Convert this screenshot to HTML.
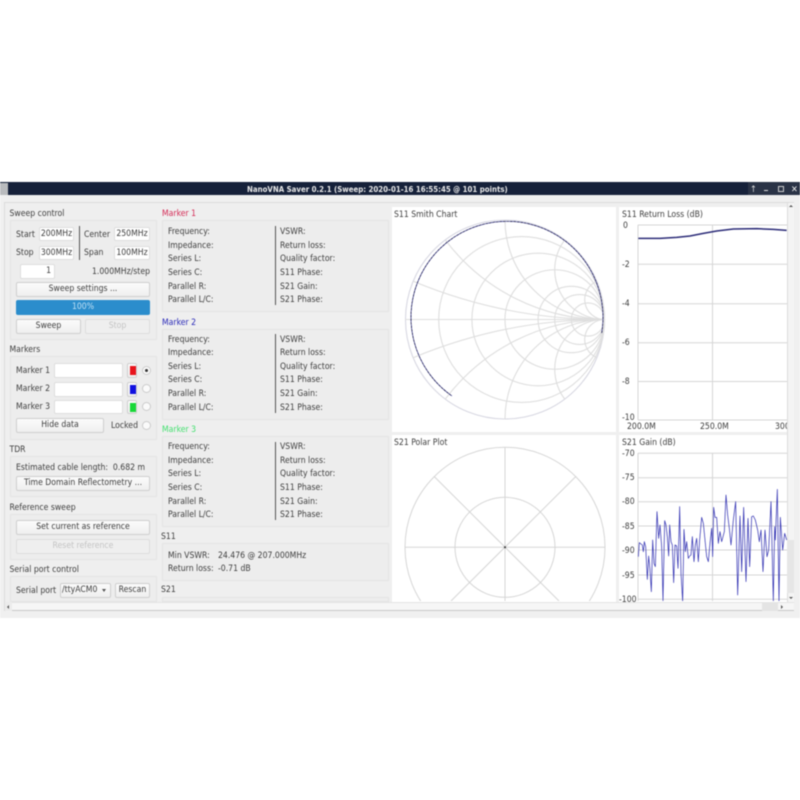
<!DOCTYPE html>
<html><head><meta charset="utf-8"><style>
html,body{margin:0;padding:0;background:#fff;width:800px;height:800px;overflow:hidden;}
#root{position:relative;width:800px;height:800px;overflow:hidden;background:#fff;font-family:"DejaVu Sans Condensed","DejaVu Sans","Liberation Sans",sans-serif;font-stretch:condensed;font-size:8.6px;color:#3e3e3e;filter:blur(.45px);}
#root div,#root span{position:absolute;box-sizing:border-box;}
.t{line-height:12px;white-space:nowrap;margin-top:.7px;}
.g{background:#ededed;border:1px solid #e4e4e4;}
.f{background:#fff;border:1px solid #ddd;border-radius:2px;line-height:13.5px;text-align:center;white-space:nowrap;}
.b{background:linear-gradient(#fbfbfb,#efefef);border:1px solid #cfcfcf;border-radius:2px;line-height:13.5px;text-align:center;white-space:nowrap;color:#3e3e3e;}
.d{color:#c4c4c4;background:#efefef;border-color:#dedede;}
.v{background:#555;width:1px;}
.r{width:9px;height:9px;border-radius:50%;background:#fafafa;border:1px solid #ccc;}
.p{background:#fff;}
</style></head><body><div id="root">
<div style="left:0;top:182px;width:800px;height:13px;background:#16213a;"></div>
<div style="left:0;top:183px;width:8px;height:12px;background:#b9bbbe;"></div>
<div class="t" style="left:247px;top:183px;color:#e8e8e8;font-weight:bold;font-size:7.8px;">NanoVNA Saver 0.2.1 (Sweep: 2020-01-16 16:55:45 @ 101 points)</div>
<div style="left:748px;top:182px;width:52px;height:13px;background:#2a3346;"></div>
<div class="t" style="left:750px;top:183px;color:#ddd;font-size:9px;">↑</div>
<div style="left:764px;top:190px;width:4px;height:1px;background:#ddd;"></div>
<div style="left:778px;top:186px;width:6px;height:6px;border:1px solid #ccc;"></div>
<div class="t" style="left:791px;top:183px;color:#eee;font-weight:bold;font-size:9px;">✕</div>
<div style="left:0;top:195px;width:800px;height:423px;background:#f0f0f0;"></div>
<div style="left:4px;top:202px;width:790px;height:409px;border:1px solid #dcdcdc;background:#efefef;"></div>

<div class="t" style="left:9.5px;top:207px;">Sweep control</div>
<div class="g" style="left:10px;top:220px;width:147px;height:120px;"></div>
<div class="t" style="left:16px;top:228px;">Start</div>
<div class="f" style="left:39px;top:227px;width:35px;height:14px;">200MHz</div>
<div class="t" style="left:16px;top:246px;">Stop</div>
<div class="f" style="left:39px;top:245.500px;width:35px;height:14px;">300MHz</div>
<div class="v" style="left:79px;top:226px;height:34px;"></div>
<div class="t" style="left:84px;top:228px;">Center</div>
<div class="f" style="left:114px;top:227px;width:36px;height:14px;">250MHz</div>
<div class="t" style="left:84px;top:246px;">Span</div>
<div class="f" style="left:114px;top:245.500px;width:36px;height:14px;">100MHz</div>
<div class="f" style="left:20px;top:264px;width:35px;height:15px;text-align:right;padding-right:3px;">1</div>
<div class="t" style="right:650px;top:265px;">1.000MHz/step</div>
<div class="b" style="left:16px;top:282px;width:134px;height:15px;">Sweep settings ...</div>
<div style="left:16px;top:300px;width:134px;height:15px;background:#2b8dcc;border-radius:2px;color:#bfe0f5;text-align:center;line-height:15.500px;">100%</div>
<div class="b" style="left:16px;top:319px;width:65px;height:15px;">Sweep</div>
<div class="b d" style="left:85px;top:319px;width:65px;height:15px;">Stop</div>

<div class="t" style="left:9.5px;top:343px;">Markers</div>
<div class="g" style="left:10px;top:356px;width:147px;height:84px;"></div>
<div class="t" style="left:16px;top:364px;">Marker 1</div>
<div class="f" style="left:54px;top:363px;width:69px;height:15px;"></div>
<div class="b" style="left:127px;top:363px;width:10px;height:15px;"></div>
<div style="left:129.500px;top:366px;width:6px;height:9px;background:#e8141c;"></div>
<div class="r" style="left:141.500px;top:365.500px;"></div>
<div style="left:144.500px;top:368.500px;width:3px;height:3px;border-radius:50%;background:#333;"></div>
<div class="t" style="left:16px;top:382px;">Marker 2</div>
<div class="f" style="left:54px;top:381.500px;width:69px;height:15px;"></div>
<div class="b" style="left:127px;top:381.500px;width:10px;height:15px;"></div>
<div style="left:129.500px;top:384.500px;width:6px;height:9px;background:#1010e0;"></div>
<div class="r" style="left:141.500px;top:384px;"></div>
<div class="t" style="left:16px;top:400.500px;">Marker 3</div>
<div class="f" style="left:54px;top:400px;width:69px;height:14px;"></div>
<div class="b" style="left:127px;top:400px;width:10px;height:14px;"></div>
<div style="left:129.500px;top:402.500px;width:6px;height:9px;background:#18d838;"></div>
<div class="r" style="left:141.500px;top:402px;"></div>
<div class="b" style="left:16px;top:418px;width:88px;height:15px;">Hide data</div>
<div class="t" style="left:111px;top:419px;">Locked</div>
<div class="r" style="left:141.500px;top:420.500px;"></div>

<div class="t" style="left:9.5px;top:443px;">TDR</div>
<div class="g" style="left:10px;top:456px;width:147px;height:41px;"></div>
<div class="t" style="left:16px;top:461px;">Estimated cable length:&nbsp; 0.682 m</div>
<div class="b" style="left:16px;top:476px;width:134px;height:15px;">Time Domain Reflectometry ...</div>

<div class="t" style="left:9.5px;top:501px;">Reference sweep</div>
<div class="g" style="left:10px;top:514px;width:147px;height:46px;"></div>
<div class="b" style="left:16px;top:520px;width:134px;height:15px;">Set current as reference</div>
<div class="b d" style="left:16px;top:539px;width:134px;height:15px;">Reset reference</div>

<div class="t" style="left:9.5px;top:563px;">Serial port control</div>
<div class="g" style="left:10px;top:576px;width:147px;height:26px;"></div>
<div class="t" style="left:16px;top:584px;">Serial port</div>
<div class="b" style="left:60px;top:583px;width:51px;height:15px;text-align:left;padding-left:1px;">/ttyACM0</div>
<div style="left:102px;top:589px;width:0;height:0;border-left:2.5px solid transparent;border-right:2.5px solid transparent;border-top:3px solid #555;"></div>
<div class="b" style="left:115px;top:583px;width:35px;height:15px;">Rescan</div>

<div class="t" style="left:162px;top:207px;color:#d42a55;">Marker 1</div>
<div class="g" style="left:162px;top:220px;width:227px;height:92px;"></div>
<div class="v" style="left:275px;top:226px;height:79px;"></div>
<div class="t" style="left:168px;top:225.500px;line-height:13.600px;white-space:pre;">Frequency:
Impedance:
Series L:
Series C:
Parallel R:
Parallel L/C:</div>
<div class="t" style="left:280px;top:225.500px;line-height:13.600px;white-space:pre;">VSWR:
Return loss:
Quality factor:
S11 Phase:
S21 Gain:
S21 Phase:</div>

<div class="t" style="left:162px;top:316px;color:#2a2ab8;">Marker 2</div>
<div class="g" style="left:162px;top:329px;width:227px;height:91px;"></div>
<div class="v" style="left:275px;top:334px;height:79px;"></div>
<div class="t" style="left:168px;top:333px;line-height:13.600px;white-space:pre;">Frequency:
Impedance:
Series L:
Series C:
Parallel R:
Parallel L/C:</div>
<div class="t" style="left:280px;top:333px;line-height:13.600px;white-space:pre;">VSWR:
Return loss:
Quality factor:
S11 Phase:
S21 Gain:
S21 Phase:</div>

<div class="t" style="left:162px;top:423px;color:#44e070;">Marker 3</div>
<div class="g" style="left:162px;top:436px;width:227px;height:91px;"></div>
<div class="v" style="left:275px;top:442px;height:78px;"></div>
<div class="t" style="left:168px;top:440.500px;line-height:13.600px;white-space:pre;">Frequency:
Impedance:
Series L:
Series C:
Parallel R:
Parallel L/C:</div>
<div class="t" style="left:280px;top:440.500px;line-height:13.600px;white-space:pre;">VSWR:
Return loss:
Quality factor:
S11 Phase:
S21 Gain:
S21 Phase:</div>

<div class="t" style="left:161px;top:530.500px;">S11</div>
<div class="g" style="left:162px;top:543px;width:227px;height:38px;"></div>
<div class="t" style="left:168px;top:549px;">Min VSWR:</div>
<div class="t" style="left:218px;top:549px;">24.476 @ 207.000MHz</div>
<div class="t" style="left:168px;top:562.500px;">Return loss:</div>
<div class="t" style="left:218px;top:562.500px;">-0.71 dB</div>
<div class="t" style="left:161px;top:583.500px;">S21</div>
<div class="g" style="left:162px;top:597px;width:227px;height:5px;"></div>

<div class="p" style="left:392px;top:207px;width:224px;height:225px;"></div>
<div class="p" style="left:619px;top:207px;width:168px;height:225px;"></div>
<div class="p" style="left:392px;top:435px;width:224px;height:167px;"></div>
<div class="p" style="left:619px;top:435px;width:168px;height:167px;"></div>

<svg width="800" height="800" viewBox="0 0 800 800" style="position:absolute;left:0;top:0;display:block;">
<defs>
<clipPath id="rc"><rect x="619" y="207" width="168" height="225"/></clipPath>
<clipPath id="gc"><rect x="392" y="435" width="395" height="166"/></clipPath>
</defs>
<g fill="none" stroke="#dedede" stroke-width="1.100">
<circle cx="505" cy="319.500" r="99.500" stroke="#d8d8e2"/>
<line x1="405" y1="319.500" x2="604" y2="319.500"/>
<circle cx="521.600" cy="319.500" r="82.900"/>
<circle cx="538.200" cy="319.500" r="66.300"/>
<circle cx="554.700" cy="319.500" r="49.750"/>
<circle cx="571.300" cy="319.500" r="33.200"/>
<circle cx="579.600" cy="319.500" r="24.900"/>
<circle cx="587.900" cy="319.500" r="16.600"/>
<path d="M604.500 319.500A497.500 497.500 0 0 1 413.200 281.300"/>
<path d="M604.500 319.500A497.500 497.500 0 0 0 413.200 357.700"/>
<path d="M604.500 319.500A199 199 0 0 1 445.300 239.900"/>
<path d="M604.500 319.500A199 199 0 0 0 445.300 399.100"/>
<path d="M604.500 319.500A99.500 99.500 0 0 1 505 220"/>
<path d="M604.500 319.500A99.500 99.500 0 0 0 505 419"/>
<path d="M604.500 319.500A49.750 49.750 0 0 1 564.700 239.900"/>
<path d="M604.500 319.500A49.750 49.750 0 0 0 564.700 399.100"/>
<path d="M604.500 319.500A19.900 19.900 0 0 1 596.800 281.300"/>
<path d="M604.500 319.500A19.900 19.900 0 0 0 596.800 357.700"/>
</g>
<g fill="none" stroke="#d6d6d6" stroke-width="1">
<g clip-path="url(#gc)">
<circle cx="505" cy="547.300" r="100"/>
<circle cx="505" cy="547.300" r="50"/>
<line x1="405" y1="547.300" x2="605" y2="547.300"/>
<line x1="505" y1="447.300" x2="505" y2="601"/>
<line x1="434.300" y1="476.600" x2="559" y2="601"/>
<line x1="575.700" y1="476.600" x2="451" y2="601"/>
</g>
<g>
<line x1="638" y1="225" x2="787" y2="225"/>
<line x1="638" y1="264.300" x2="787" y2="264.300"/>
<line x1="638" y1="303.700" x2="787" y2="303.700"/>
<line x1="638" y1="342.800" x2="787" y2="342.800"/>
<line x1="638" y1="381.500" x2="787" y2="381.500"/>
<line x1="638" y1="420" x2="787" y2="420"/>
<line x1="638" y1="225" x2="638" y2="420"/>
<line x1="712.500" y1="225" x2="712.500" y2="420"/>
<line x1="638" y1="453.300" x2="787" y2="453.300"/>
<line x1="638" y1="477.700" x2="787" y2="477.700"/>
<line x1="638" y1="501.700" x2="787" y2="501.700"/>
<line x1="638" y1="526" x2="787" y2="526"/>
<line x1="638" y1="550" x2="787" y2="550"/>
<line x1="638" y1="575" x2="787" y2="575"/>
<line x1="638" y1="599.300" x2="787" y2="599.300"/>
<line x1="638" y1="453" x2="638" y2="601"/>
<line x1="712.500" y1="453" x2="712.500" y2="601"/>
</g>
</g>
<path d="M601.700 333 A96 96 0 1 0 452 396" fill="none" stroke="#4a4aa8" stroke-width=".7"/>
<path d="M601.700 333 A96 96 0 1 0 452 396" fill="none" stroke="#1c1c48" stroke-width=".7" stroke-dasharray="2.500 1"/>
<g clip-path="url(#rc)"><polyline transform="translate(390,175) scale(.33333)" fill="none" stroke="#2c2c78" stroke-width="4.500" points="745,190 810,190 860,187 900,183 940,175 980,168 1030,162 1100,161 1150,163 1190,166"/></g>
<g clip-path="url(#gc)"><g transform="translate(390,430) scale(.33333)" fill="none" stroke-linejoin="round">
<polyline stroke="#3636b4" stroke-width="2.200" points="745,380 748,338 753,342 757,345 760,365 763,335 767,350 770,410 772,448 776,378 780,420 784,485 788,330 792,400 796,410 801,245 806,325 810,285 815,350 819,512 824,272 828,285 832,320 836,378 839,285 843,335 847,345 851,458 855,345 860,348 864,415 869,230 873,430 878,515 882,298 886,365 890,335 895,385 899,378 903,375 907,320 912,395 916,345 920,325 925,395 929,330 935,262 940,280 945,330 950,380 955,395 960,340 965,295 968,380 971,232 975,262 980,262 985,340 990,305 995,335 999,320 1003,305 1008,195 1013,255 1018,295 1023,345 1030,270 1037,215 1043,495 1050,258 1055,425 1061,232 1068,455 1074,265 1079,410 1085,260 1090,258 1096,270 1103,300 1108,335 1113,300 1119,425 1125,300 1131,380 1136,360 1143,215 1150,515 1154,290 1156,330 1162,178 1167,515 1171,262 1178,360 1184,310 1190,330"/>
</g></g>
<circle cx="505" cy="547.300" r="1" fill="#333"/>
</svg>

<div class="t" style="left:394px;top:208px;">S11 Smith Chart</div>
<div class="t" style="left:622px;top:208px;">S11 Return Loss (dB)</div>
<div class="t" style="left:623px;top:219px;">0</div>
<div class="t" style="left:622px;top:258.500px;">-2</div>
<div class="t" style="left:622px;top:297.500px;">-4</div>
<div class="t" style="left:622px;top:336.500px;">-6</div>
<div class="t" style="left:622px;top:375.500px;">-8</div>
<div class="t" style="left:622px;top:411.500px;">-10</div>
<div class="t" style="left:627px;top:420.500px;">200.0M</div>
<div class="t" style="left:700px;top:420.500px;">250.0M</div>
<div class="t" style="left:775px;top:420.500px;width:12px;overflow:hidden;">300.0M</div>
<div class="t" style="left:394px;top:436px;">S21 Polar Plot</div>
<div class="t" style="left:622px;top:436px;">S21 Gain (dB)</div>
<div class="t" style="left:622px;top:447px;">-70</div>
<div class="t" style="left:622px;top:471.500px;">-75</div>
<div class="t" style="left:622px;top:495.500px;">-80</div>
<div class="t" style="left:622px;top:520px;">-85</div>
<div class="t" style="left:622px;top:544px;">-90</div>
<div class="t" style="left:622px;top:569px;">-95</div>
<div class="t" style="left:619px;top:593px;">-100</div>

<div style="left:787px;top:203px;width:7px;height:399px;background:#f4f4f4;border-left:1px solid #ddd;"></div>
<div style="left:787px;top:540px;width:7px;height:53px;background:#e6e6e6;"></div>
<div style="left:788.500px;top:205px;width:0;height:0;border-left:2px solid transparent;border-right:2px solid transparent;border-bottom:2.5px solid #555;"></div>
<div style="left:788.500px;top:597px;width:0;height:0;border-left:2px solid transparent;border-right:2px solid transparent;border-top:2.5px solid #555;"></div>
<div style="left:5px;top:602px;width:789px;height:9px;background:#f6f6f6;border-top:1px solid #e4e4e4;border-bottom:1px solid #c9c9c9;"></div>
<div style="left:5px;top:602px;width:7px;height:9px;background:#ececec;"></div>
<div style="left:6.500px;top:605px;width:0;height:0;border-top:2px solid transparent;border-bottom:2px solid transparent;border-right:2.5px solid #555;"></div>
<div style="left:762px;top:602px;width:16px;height:9px;background:#e4e4e4;"></div>
<div style="left:781px;top:605px;width:0;height:0;border-top:2px solid transparent;border-bottom:2px solid transparent;border-left:2.5px solid #555;"></div>
</div></body></html>
